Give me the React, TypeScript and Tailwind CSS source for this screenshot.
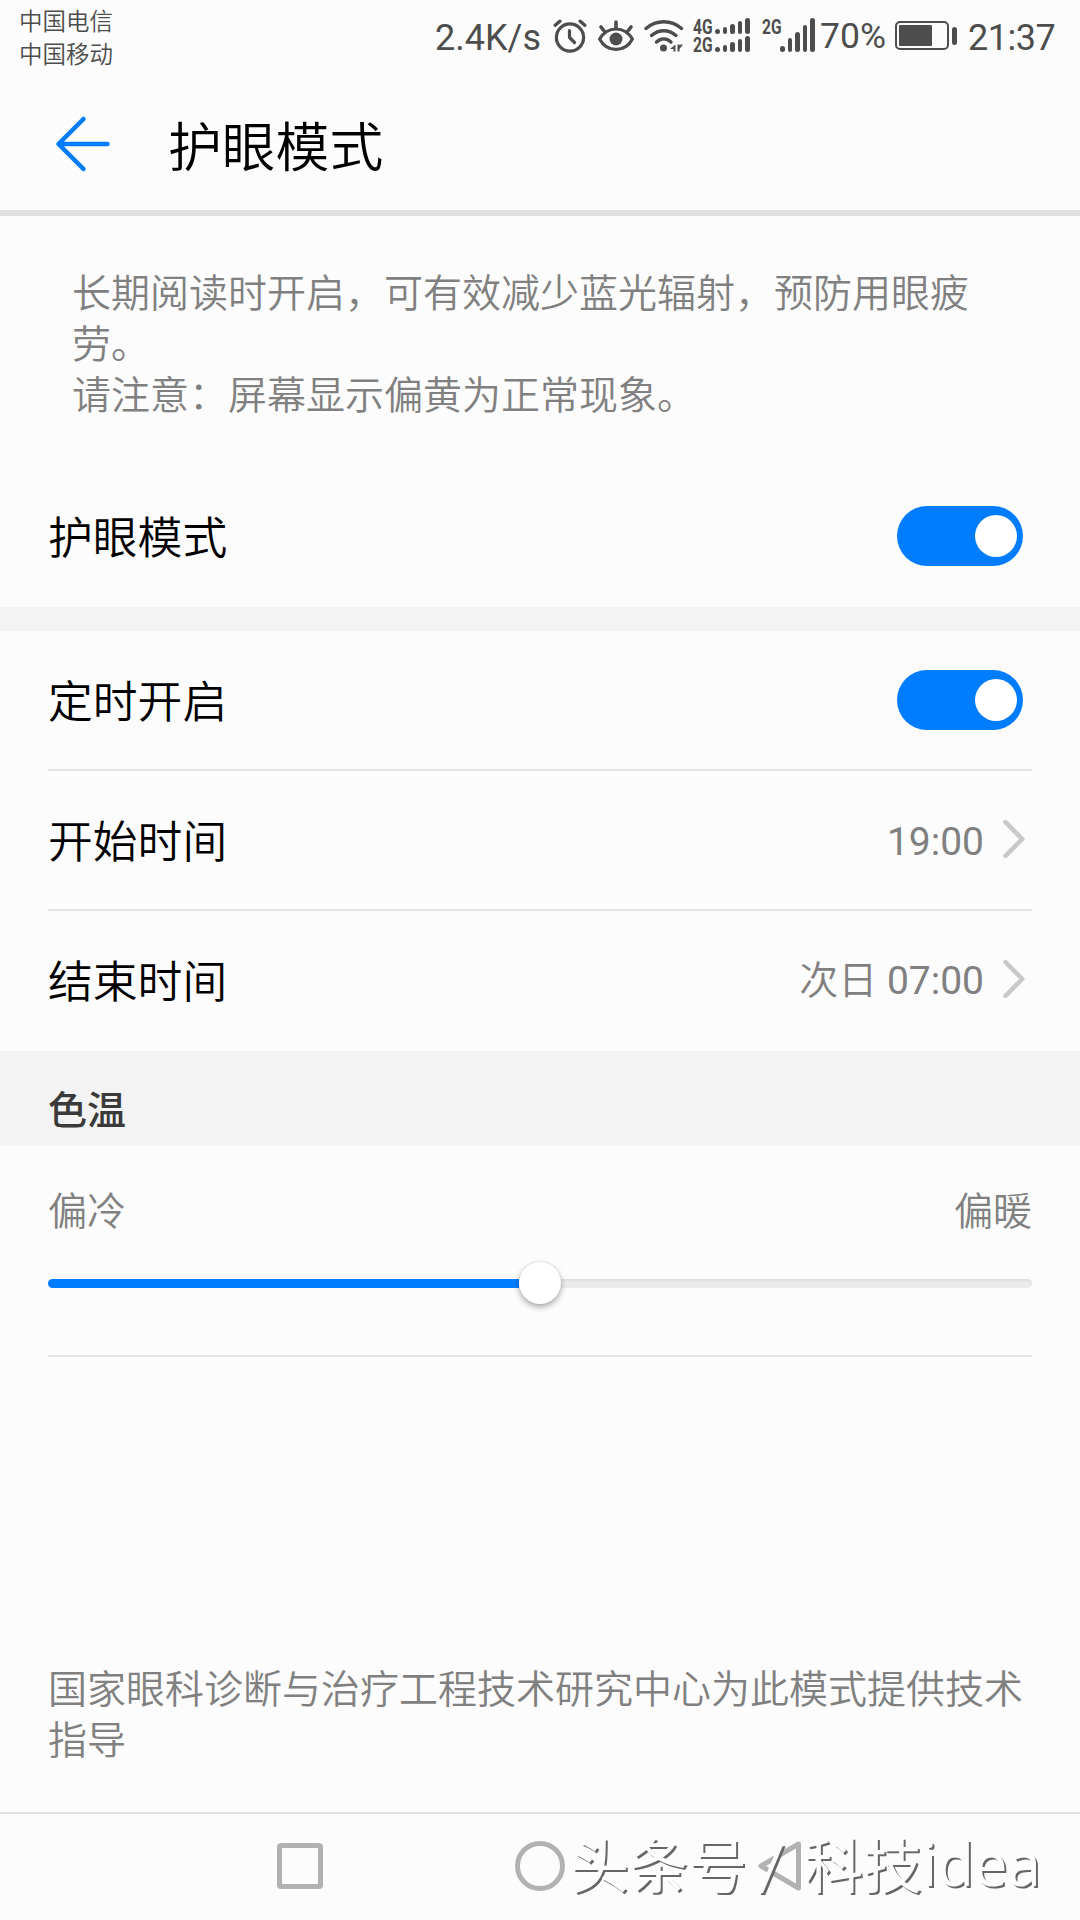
import React from "react";

const CJK = "font-['Noto_Sans_CJK_SC',sans-serif]";

function AlarmIcon() {
  return (
    <svg className="block h-[34px] w-[34px] shrink-0" viewBox="0 0 34 34" fill="none" stroke="#4d4d4d" strokeLinecap="round">
      <circle cx="17" cy="18.5" r="13.6" strokeWidth="3.2" />
      <path d="M16.5 11.5v7l5 5" strokeWidth="3.2" strokeLinejoin="round" />
      <path d="M2.2 6.2l4.6-4M31.8 6.2l-4.6-4" strokeWidth="3.4" />
    </svg>
  );
}

function EyeIcon() {
  return (
    <svg className="block h-[34px] w-[38px] shrink-0" viewBox="0 0 38 34" fill="none" stroke="#4d4d4d" strokeLinecap="round">
      <path d="M2.6 20c4-6.500 9.500-10 16.400-10s12.400 3.500 16.400 10c-3.500 6.700-9 10.400-16.400 10.400S6.100 26.700 2.600 20z" strokeWidth="3.200" strokeLinejoin="round" />
      <circle cx="19" cy="20" r="6.500" fill="#4d4d4d" stroke="none" />
      <path d="M19 3v6M4 8l3.500 4.500M34 8l-3.500 4.500" strokeWidth="3.600" />
    </svg>
  );
}

function WifiIcon() {
  return (
    <svg className="block h-[34px] w-[40px] shrink-0" viewBox="0 0 40 34" fill="none" stroke="#4d4d4d" strokeLinecap="round">
      <path d="M2 9.500C12.500.500 27 .500 37.500 9.500" strokeWidth="3.400" />
      <path d="M7.500 16.500c7.500-6.300 17-6.300 24.500 0" strokeWidth="3.400" />
      <path d="M12.500 23c4.500-4 10-4 14.500 0" strokeWidth="3.400" />
      <circle cx="19.500" cy="29" r="3.500" fill="#4d4d4d" stroke="none" />
      <path d="M31.500 25.500v7h-2v-2.500h-3.500zM33.500 25.500v7h2v-2.500l3.500-4.500h-2.500l-1 1v-1z" fill="#4d4d4d" stroke="none" />
    </svg>
  );
}

function SignalBars({ heights }: { heights: number[] }) {
  return (
    <span className="flex items-end gap-[3px]">
      {heights.map((h, i) => (
        <span key={i} className="block w-[4.600px] rounded-full bg-[#4d4d4d]" style={{ height: h }} />
      ))}
    </span>
  );
}

function NetLabel({ children }: { children: React.ReactNode }) {
  return (
    <span className="block w-[19px] shrink-0">
      <span className="block w-[26px] origin-left scale-x-[0.740] font-['Roboto',sans-serif] text-[21px] font-bold leading-[18px]">
        {children}
      </span>
    </span>
  );
}

function StatusBar() {
  return (
    <div className="flex h-[72px] items-start justify-between pl-[19px] pr-[25px] text-[#4d4d4d]">
      <div className={`pt-[4px] text-[23.500px] font-[350] leading-[33px] ${CJK}`}>
        <div>中国电信</div>
        <div>中国移动</div>
      </div>
      <div className="flex items-start font-['Roboto',sans-serif] font-normal">
        <span className="mr-[12px] mt-[18px] block w-[106px] whitespace-nowrap text-[36px] leading-[40px]">2.4K/s</span>
        <span className="mt-[19px] mr-[10px]"><AlarmIcon /></span>
        <span className="mt-[19px] mr-[9px]"><EyeIcon /></span>
        <span className="mt-[19px] mr-[9px]"><WifiIcon /></span>
        <span className="mt-[18px] mr-[12px] flex gap-[3px]">
          <NetLabel>4G<br />2G</NetLabel>
          <span className="flex flex-col gap-[2px]">
            <SignalBars heights={[5, 7, 10, 13, 16]} />
            <SignalBars heights={[5, 7, 10, 13, 16]} />
          </span>
        </span>
        <span className="mt-[18px] mr-[5px] flex items-start">
          <NetLabel>2G</NetLabel>
          <span className="-ml-px"><SignalBars heights={[6, 14, 20, 27, 34]} /></span>
        </span>
        <span className="mt-[16px] block w-[75px] whitespace-nowrap text-[35.500px] leading-[40px]">70%</span>
        <span className="mt-[21px] mr-[11px] flex items-center gap-[3px]">
          <span className="block h-[29px] w-[54px] rounded-[5px] border-2 border-[#4d4d4d] p-[2px]">
            <span className="block h-full w-[33px] rounded-[1px] bg-[#4d4d4d]" />
          </span>
          <span className="block h-[18px] w-[5px] rounded-full bg-[#4d4d4d]" />
        </span>
        <span className="mt-[18px] block w-[87px] whitespace-nowrap text-[36px] leading-[40px] tracking-[-0.500px]">21:37</span>
      </div>
    </div>
  );
}

function Switch() {
  return (
    <span role="switch" aria-checked="true" className="flex h-[60px] w-[126px] items-center justify-end rounded-full bg-[#007dff] pr-[6px]">
      <span className="block size-[42px] rounded-full bg-white" />
    </span>
  );
}

function Chevron() {
  return (
    <svg className="ml-[19px] mt-[-3px] block h-[40px] w-[24px]" viewBox="0 0 24 40" fill="none" stroke="#c9c9c9" strokeWidth="4.500" strokeLinecap="round" strokeLinejoin="round">
      <path d="M3.500 3.200L20.300 20L3.500 36.800" />
    </svg>
  );
}

function Row({ label, children, divider }: { label: string; children: React.ReactNode; divider?: boolean }) {
  return (
    <div className={`mx-[48px] flex h-[140px] items-center justify-between ${divider ? "border-b-2 border-[#e5e5e5]" : "pb-[2px]"}`}>
      <span className={`-mt-[2px] text-[44.800px] font-[350] leading-[60px] text-black ${CJK}`}>{label}</span>
      {children}
    </div>
  );
}

function TimeValue({ prefix, children }: { prefix?: string; children: string }) {
  return (
    <span className="flex items-center pr-[6px] font-['Roboto',sans-serif] text-[39px] font-normal leading-[50px] text-[#808080]">
      <span className={`mr-[-1px] whitespace-pre ${prefix ? "-mt-[2px]" : "mt-[3px]"}`}>
        {prefix && <span className={`font-[350] ${CJK}`}>{prefix}</span>}
        {prefix ? ` ${children}` : children}
      </span>
      <Chevron />
    </span>
  );
}

export default function App() {
  return (
    <div className={`flex h-[1920px] w-[1080px] flex-col overflow-hidden bg-[#fcfcfc] font-[350] ${CJK}`}>
      <StatusBar />
      <header className="flex h-[144px] items-center border-b-[6px] border-[#e0e0e0] pl-[54px]">
        <svg className="mt-[6px] block h-[58px] w-[58px]" viewBox="0 0 58 58" fill="none" stroke="#007dff" strokeWidth="4.500" strokeLinecap="round" strokeLinejoin="round">
          <path d="M29.500 4L4.500 29L29.500 54M4.500 29H53.500" />
        </svg>
        <h1 className="ml-[56px] mt-[5px] text-[53.800px] leading-[72px] text-black">护眼模式</h1>
      </header>

      <p className="h-[252px] pl-[72px] pt-[49px] text-[39px] leading-[51px] text-[#808080]">
        长期阅读时开启，可有效减少蓝光辐射，预防用眼疲
        <br />
        劳。
        <br />
        请注意：屏幕显示偏黄为正常现象。
      </p>
      <div className="-mt-px h-[140px]">
        <Row label="护眼模式"><span className="pr-[9px]"><Switch /></span></Row>
      </div>
      <div className="h-[24px] bg-[#f3f3f3]" />
      <Row label="定时开启" divider><span className="pr-[9px]"><Switch /></span></Row>
      <Row label="开始时间" divider><TimeValue>19:00</TimeValue></Row>
      <Row label="结束时间"><TimeValue prefix="次日">07:00</TimeValue></Row>
      <h2 className="h-[95px] bg-[#f3f3f3] pl-[48px] pt-[31px] text-[39px] font-medium leading-[50px] text-[#3a3a3a]">色温</h2>

      <section className="mx-[48px] h-[211px] border-b-2 border-[#e5e5e5] pt-[37px]">
        <div className="flex justify-between text-[39px] leading-[50px] text-[#808080]">
          <span>偏冷</span>
          <span>偏暖</span>
        </div>
        <div className="mt-[29px] flex h-[42px] items-center">
          <span className="h-[9px] w-[471px] rounded-l-full bg-[#007dff]" />
          <span className="relative size-[42px] rounded-full bg-white shadow-[0_3px_6px_rgba(0,0,0,0.32),0_0_2px_rgba(0,0,0,0.15)]" />
          <span className="h-[9px] flex-1 rounded-r-full bg-[#ebebeb] shadow-[inset_0_2px_2px_rgba(0,0,0,0.05)]" />
        </div>
      </section>

      <p className="mt-auto pb-[49px] pl-[48px] text-[39px] leading-[51px] text-[#808080]">
        国家眼科诊断与治疗工程技术研究中心为此模式提供技术
        <br />
        指导
      </p>
      <nav className="relative flex h-[108px] shrink-0 items-start border-t-2 border-[#e0e0e0] pl-[277px]">
        <span className="mt-[29px] block size-[46px] rounded-[4px] border-[5px] border-[#b2b2b2]" />
        <span className="ml-[192px] mt-[27px] block size-[50px] rounded-full border-[5px] border-[#b2b2b2]" />
        <svg className="ml-[193px] mt-[27px] block h-[50px] w-[44px]" viewBox="0 0 44 50" fill="none" stroke="#b2b2b2" strokeWidth="5" strokeLinejoin="round">
          <path d="M40.500 3L3 25L40.500 47z" />
        </svg>
        <div className="absolute left-[570px] top-[7px] flex whitespace-nowrap text-[59px] font-normal leading-[84px] text-[#fdfdfd] [text-shadow:2px_2px_0_#666]">
          <span className="w-[191px]">头条号</span>
          <span className="w-[43px] origin-center scale-x-[1.150] scale-y-[0.850]">/</span>
          <span>科技</span>
          <span className="font-['Open_Sans',sans-serif] text-[60px]">idea</span>
        </div>
      </nav>
    </div>
  );
}
